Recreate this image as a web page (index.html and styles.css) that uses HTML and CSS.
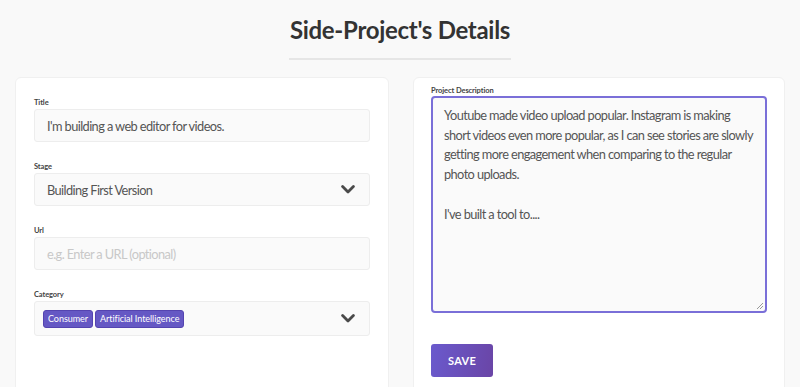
FILE: index.html
```html
<!DOCTYPE html>
<html>
<head>
<meta charset="utf-8">
<link rel="stylesheet" href="styles.css">
</head>
<body>
<div class="page">
  <header class="head">
    <h1 class="title">Side-Project's Details</h1>
    <div class="rule"></div>
  </header>
  <main class="cols">
    <section class="card left">
      <div class="field">
        <label class="lbl">Title</label>
        <div class="box"><span class="val">I'm building a web editor for videos.</span></div>
      </div>
      <div class="field">
        <label class="lbl">Stage</label>
        <div class="box sel"><span class="val">Building First Version</span>
          <svg class="chev" width="14" height="9" viewBox="0 0 14 9"><path d="M1.6 1.6 L7 7 L12.4 1.6" fill="none" stroke="#4a4a4a" stroke-width="2.8" stroke-linecap="round" stroke-linejoin="round"/></svg>
        </div>
      </div>
      <div class="field">
        <label class="lbl">Url</label>
        <div class="box"><span class="val ph">e.g. Enter a URL (optional)</span></div>
      </div>
      <div class="field">
        <label class="lbl">Category</label>
        <div class="box sel tagbox">
          <div class="tags"><span class="tag">Consumer</span><span class="tag">Artificial Intelligence</span></div>
          <svg class="chev" width="14" height="9" viewBox="0 0 14 9"><path d="M1.6 1.6 L7 7 L12.4 1.6" fill="none" stroke="#4a4a4a" stroke-width="2.8" stroke-linecap="round" stroke-linejoin="round"/></svg>
        </div>
      </div>
    </section>
    <section class="card right">
      <label class="lbl">Project Description</label>
      <div class="ta">
        <p>Youtube made video upload popular. Instagram is making<br>short videos even more popular, as I can see stories are slowly<br>getting more engagement when comparing to the regular<br>photo uploads.</p>
        <p class="gap">I've built a tool to....</p>
        <svg class="grip" width="8" height="8" viewBox="0 0 8 8"><path d="M7 1 L1 7 M7 4 L4 7" stroke="#999" stroke-width="1"/></svg>
      </div>
      <button class="save">SAVE</button>
    </section>
  </main>
</div>
</body>
</html>
```
FILE: styles.css
```css
* { box-sizing: border-box; }
html, body { margin: 0; padding: 0; }
body {
  background: #f9f9f9;
  font-family: Lato, "Open Sans", sans-serif;
  color: #333;
  width: 800px;
  height: 387px;
  overflow: hidden;
}
.page { padding-top: 14px; }
.head { display: flex; flex-direction: column; align-items: center; }
.title {
  margin: 0;
  font-size: 24px;
  letter-spacing: -0.3px;
  line-height: 32px;
  font-weight: 700;
  color: #333;
}
.rule {
  width: 222px;
  height: 2px;
  background: #e6e6e6;
  margin-top: 12px;
}
.cols {
  display: flex;
  gap: 24px;
  padding: 0 15px;
  margin-top: 17px;
}
.card {
  flex: 1 1 0;
  min-width: 0;
  background: #fff;
  border: 1px solid #f0f0f0;
  border-radius: 6px;
  height: 330px;
}
.left { padding: 20px 18px 0 18px; }
.right { padding: 8px 17px 0 17px; }
.field { margin-bottom: 20px; }
.lbl {
  display: block;
  font-size: 7.5px;
  letter-spacing: -0.1px;
  font-weight: 700;
  color: #444;
  line-height: 10px;
  margin-bottom: 1px;
}
.right .lbl { margin-bottom: 0; }
.box {
  height: 33px;
  background: #fafafa;
  border: 1px solid #ededed;
  border-radius: 3px;
  display: flex;
  align-items: center;
  padding: 0 12px;
}
.val { font-size: 12.8px; letter-spacing: -0.6px; color: #555; }
.ph { color: #c8c8c8; }
.sel { justify-content: space-between; padding-right: 14px; }
.tagbox { height: 35px; padding-left: 8px; }
.tags { display: flex; gap: 2px; }
.tag {
  background: #6558c4;
  color: #fff;
  font-size: 9px;
  letter-spacing: -0.05px;
  line-height: 16px;
  padding: 0 4px;
  border-radius: 3px;
  border: 1px solid #5444b0;
}
.ta {
  position: relative;
  height: 217px;
  background: #fafafa;
  border: 2px solid #7a6fd8;
  border-radius: 4px;
  padding: 8px 11px;
  font-size: 12.8px;
  letter-spacing: -0.6px;
  line-height: 19.7px;
  color: #555;
  white-space: nowrap;
  overflow: hidden;
}
.ta p { margin: 0; }
.ta .gap { margin-top: 19.7px; }
.grip { position: absolute; right: 1px; bottom: 1px; }
.save {
  margin-top: 31px;
  width: 62px;
  height: 33px;
  border: none;
  border-radius: 3px;
  background: linear-gradient(100deg, #6a5acd, #6a45a6);
  color: #fff;
  font-family: inherit;
  font-size: 11px;
  font-weight: 700;
  letter-spacing: 0.3px;
}
```
